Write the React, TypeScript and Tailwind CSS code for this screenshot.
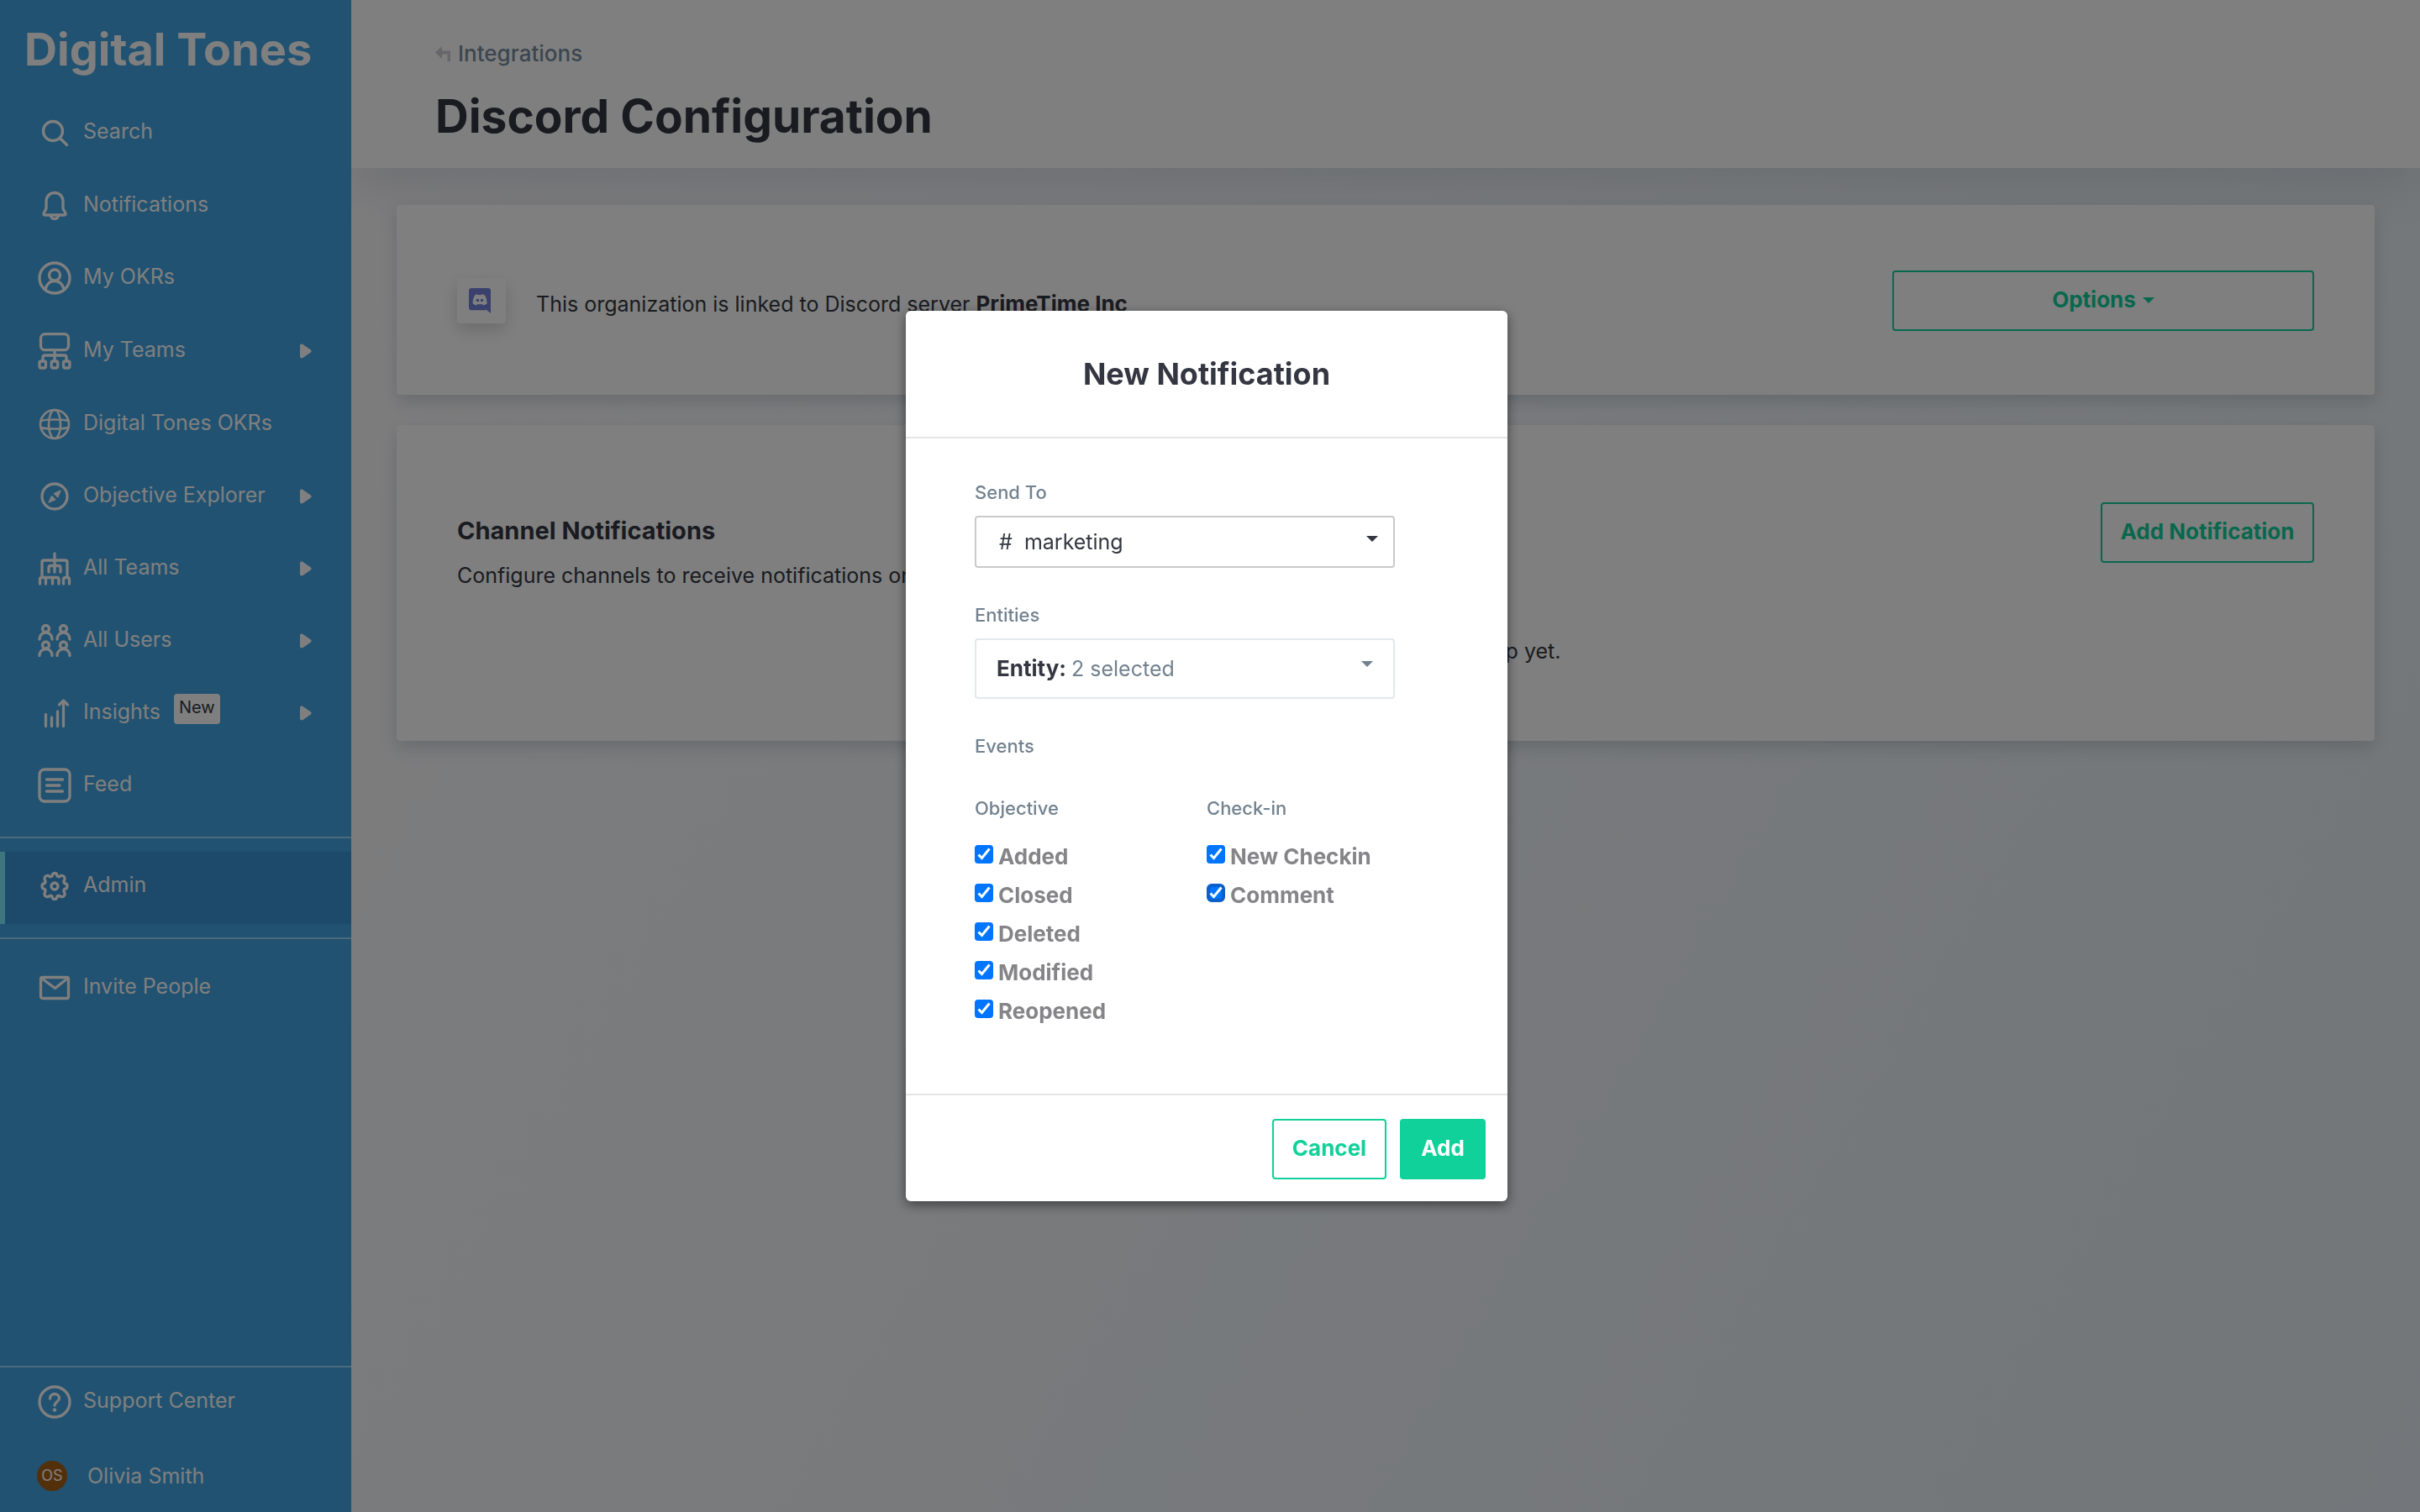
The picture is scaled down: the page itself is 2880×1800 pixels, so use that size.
import React, { useState } from "react";

type IconProps = { children: React.ReactNode };

function Icon({ children }: IconProps) {
  return (
    <svg
      viewBox="0 0 40 44"
      className="mb-1 h-11 w-10 shrink-0"
      fill="none"
      stroke="currentColor"
      strokeWidth="3.3"
      strokeLinecap="round"
      strokeLinejoin="round"
      aria-hidden="true"
    >
      {children}
    </svg>
  );
}

const SearchIcon = () => (
  <Icon>
    <circle cx="18" cy="20" r="11.5" />
    <path d="M26.5 28.5 34.5 36.5" />
  </Icon>
);

const BellIcon = () => (
  <Icon>
    <path d="M20 6.5c-6 0-10 4.5-10 10.500v7.500c0 3-3 4.500-3 7 0 1 .5 1.500 1.500 1.500h23c1 0 1.500-.5 1.500-1.500 0-2.500-3-4-3-7V17c0-6-4-10.500-10-10.500Z" />
    <path d="M15.500 34c.5 2.500 2.500 3.500 4.500 3.500s4-1 4.500-3.500" />
  </Icon>
);

const UserIcon = () => (
  <Icon>
    <circle cx="20" cy="22" r="18" />
    <circle cx="20" cy="18.500" r="6.500" />
    <path d="M9 35.500c1-6 5.500-10 11-10s10 4 11 10" />
  </Icon>
);

const TeamIcon = () => (
  <Icon>
    <rect x="3.500" y="1.700" width="33" height="19" rx="5" />
    <path d="M20 21v12M6 33v-3.500c0-1.500 1-2.500 2.500-2.500h23c1.500 0 2.500 1 2.500 2.500V33" />
    <rect x="2" y="34" width="7.500" height="8" rx="2" />
    <rect x="16.200" y="34" width="7.500" height="8" rx="2" />
    <rect x="30.500" y="34" width="7.500" height="8" rx="2" />
  </Icon>
);

const GlobeIcon = () => (
  <Icon>
    <g strokeWidth="2.600">
      <circle cx="20" cy="22" r="17" />
      <ellipse cx="20" cy="22" rx="7" ry="17" />
      <path d="M4 18c5-2 27-2 32 0M4 26c5 2 27 2 32 0" />
    </g>
  </Icon>
);

const CompassIcon = () => (
  <Icon>
    <circle cx="20" cy="22" r="15" />
    <path d="M27 15 19 18.500l4.500 4.500Z" fill="currentColor" strokeWidth="1" />
    <path d="M13 29l3.500-8 4.500 4.500Z" fill="currentColor" strokeWidth="1" />
  </Icon>
);

const OrgIcon = () => (
  <Icon>
    <path d="M20 4v22M5 32V14.500C5 13 6 12 7.500 12h25c1.500 0 2.500 1 2.500 2.500V32" />
    <path d="M13 26v-5c0-1.500 1-2.500 2.500-2.500h9c1.500 0 2.500 1 2.500 2.500v5" />
    <path d="M2.500 40v-5c0-1.500 1-2.500 2.500-2.500h17.500c1.500 0 2.500 1 2.500 2.500v5M9.500 33v7M17.500 33v7M30.500 40v-5c0-1.500 1-2.500 2.500-2.500h2c1.500 0 2.500 1 2.500 2.500v5" />
  </Icon>
);

const UsersIcon = () => (
  <Icon>
    {[
      [9.5, 7.5],
      [30.5, 7.5],
      [9.5, 27],
      [30.5, 27],
    ].map(([x, y]) => (
      <g key={`${x}-${y}`}>
        <circle cx={x} cy={y} r="4" />
        <path d={`M${x - 7.5} ${y + 12.5}c0-5 3.500-8 7.500-8s7.500 3 7.500 8`} />
      </g>
    ))}
  </Icon>
);

const InsightsIcon = () => (
  <Icon>
    <path d="M9.500 23.500v14M16.500 27v10.500M23.500 20v17.500M30.500 7.500v30M25.500 12l5-5 5 5" />
  </Icon>
);

const FeedIcon = () => (
  <Icon>
    <rect x="2" y="3" width="36" height="38" rx="6" />
    <path d="M10.500 15h19M10.500 22h15.500M10.500 29h19" />
  </Icon>
);

const GearIcon = () => (
  <Icon>
    <circle cx="20" cy="22" r="4" />
    <path d="M17 10c0-2 1-3.500 3-3.500s3 1.500 3 3.500c1.500 1.200 3 .8 4.500-.5 3-.5 5 1.500 4.500 4.500-1.200 1.500-1.500 3-.3 4.500 2 .2 3.300 1.500 3.300 3.500s-1.300 3.300-3.300 3.500c-1.200 1.500-.9 3 .3 4.500.5 3-1.500 5-4.500 4.500-1.500-1.300-3-1.700-4.500-.5 0 2-1 3.500-3 3.500s-3-1.500-3-3.500c-1.500-1.200-3-.8-4.500.5-3 .5-5-1.500-4.500-4.500 1.200-1.500 1.500-3 .3-4.500-2-.2-3.300-1.500-3.300-3.500s1.300-3.300 3.300-3.500c1.200-1.500.9-3-.3-4.500-.5-3 1.500-5 4.500-4.500 1.500 1.300 3 1.700 4.500.5Z" />
  </Icon>
);

const MailIcon = () => (
  <Icon>
    <rect x="3.500" y="9.500" width="33" height="25" rx="2" />
    <path d="M5 11l15.500 11.500L35 11" />
  </Icon>
);

const HelpIcon = () => (
  <Icon>
    <circle cx="20" cy="22" r="18" />
    <path d="M14.500 18c0-3.500 2.500-5.500 5.500-5.500s5.500 2 5.500 5c0 4-5 4.500-5.500 8.500" />
    <path d="M20 31.500v.1" strokeWidth="4.500" />
  </Icon>
);

const Caret = ({ className }: { className: string }) => (
  <svg viewBox="0 0 14 7" className={className} fill="currentColor" aria-hidden="true">
    <path d="M0 0h14L7 7Z" />
  </svg>
);

type NavItem = {
  label: string;
  icon: React.ReactNode;
  arrow?: boolean;
  badge?: string;
  tall?: boolean;
  active?: boolean;
};

const mainNav: NavItem[] = [
  { label: "Search", icon: <SearchIcon />, tall: true },
  { label: "Notifications", icon: <BellIcon /> },
  { label: "My OKRs", icon: <UserIcon /> },
  { label: "My Teams", icon: <TeamIcon />, arrow: true, tall: true },
  { label: "Digital Tones OKRs", icon: <GlobeIcon /> },
  { label: "Objective Explorer", icon: <CompassIcon />, arrow: true },
  { label: "All Teams", icon: <OrgIcon />, arrow: true },
  { label: "All Users", icon: <UsersIcon />, arrow: true },
  { label: "Insights", icon: <InsightsIcon />, arrow: true, badge: "New" },
  { label: "Feed", icon: <FeedIcon /> },
];

function NavRow({ item }: { item: NavItem }) {
  return (
    <a
      href="#"
      className={`flex items-center border-l-6 pr-[47px] pl-[39px] ${item.tall ? "h-[88px]" : "h-[86px]"} ${
        item.active ? "border-[#7ceafe] bg-[#3a94d4]" : "border-transparent"
      }`}
    >
      {item.icon}
      <span className="flex items-center gap-4 pb-2 pl-3.5">
        {item.label}
        {item.badge && (
          <span className="mb-1.5 flex h-9 items-center rounded bg-white px-1.5 pb-1 text-[20px] leading-6 text-[#343741]">
            {item.badge}
          </span>
        )}
      </span>
      {item.arrow && (
        <svg viewBox="0 0 14 18" className="mb-1 ml-auto h-[18px] w-3.5" fill="currentColor" aria-hidden="true">
          <path d="M0 2.500C0 .5 2 0 3.500 1l9 6.300c1.500 1 1.500 2.400 0 3.400l-9 6.300C2 18 0 17.500 0 15.500Z" />
        </svg>
      )}
    </a>
  );
}

const Divider = () => <hr className="h-0.5 border-0 bg-[#9ad4f4]" />;

function Sidebar() {
  return (
    <nav className="relative z-10 flex w-[418px] shrink-0 flex-col bg-[#42a4e2] text-[25px] leading-8 text-white">
      <div className="flex h-[116px] items-center pt-0.5 pl-[29px] text-[54px] leading-none font-bold">
        Digital Tones
      </div>
      {mainNav.map((item) => (
        <NavRow key={item.label} item={item} />
      ))}
      <div className="my-4 flex flex-col gap-4">
        <Divider />
        <NavRow item={{ label: "Admin", icon: <GearIcon />, active: true }} />
        <Divider />
      </div>
      <NavRow item={{ label: "Invite People", icon: <MailIcon />, tall: true }} />
      <div className="mt-auto">
        <Divider />
        <NavRow item={{ label: "Support Center", icon: <HelpIcon /> }} />
        <a href="#" className="flex h-[86px] items-center gap-6 pl-11">
          <span className="flex size-9 items-center justify-center rounded-full bg-[#a66018] text-[18px] leading-6">
            OS
          </span>
          Olivia Smith
        </a>
      </div>
    </nav>
  );
}

const card = "rounded bg-white px-[72px] shadow-[0_8px_20px_rgba(60,80,100,0.2)]";
const outlineButton =
  "flex h-[72px] items-center justify-center rounded border-2 border-[#11d19a] text-[26px] leading-8 font-bold text-[#11d19a]";

function Page() {
  return (
    <div className="flex min-w-0 flex-1 flex-col bg-linear-120 from-[#fcfafc] via-[#f0f5f8] to-[#e6edf4]">
      <header className="bg-white px-[100px] pt-12 pb-7 shadow-[0_20px_60px_rgba(60,90,120,0.16)]">
        <a href="#" className="flex w-fit items-center gap-[9px] text-[26px] leading-8 font-medium text-[#788c9e]">
          <svg viewBox="0 0 18 18" className="h-[18px] w-[18px] text-[#cdced6]" fill="currentColor" aria-hidden="true">
            <path d="M0 7.500 8 0v5.500h10V18h-3.500V9.500H8V15Z" />
          </svg>
          Integrations
        </a>
        <h1 className="mt-6 text-[55px] leading-[68px] font-bold text-[#343741]">Discord Configuration</h1>
      </header>
      <main className="flex flex-col gap-9 px-[54px] pt-11 text-[25px] leading-8 text-[#343741]">
        <section className={`${card} flex h-[226px] items-center pt-0.5`}>
          <span className="flex h-[54px] w-[58px] items-center justify-center rounded bg-white pr-1 shadow-[0_8px_20px_rgba(0,0,0,0.16)]">
            <svg viewBox="0 0 26 30" className="h-[30px] w-[26px]" role="img" aria-label="Discord">
              <path d="M3 0h20a3 3 0 0 1 3 3v27l-6-5 .6 1.200H3A3 3 0 0 1 0 23.200V3a3 3 0 0 1 3-3Z" fill="#7283d8" />
              <path
                d="M9 7.500 7 8.500C5 12 4.500 15 4.700 18.500c1.500 1.200 3 1.800 4.500 2l1-1.500c2 .4 3.800.4 5.800 0l1 1.500c1.500-.2 3-.8 4.500-2C21.500 15 21 12 19 8.500l-2-1-1.500-.3-.6 1a12 12 0 0 0-3.800 0l-.6-1Z"
                fill="#fff"
              />
              <circle cx="10.400" cy="14.500" r="1.800" fill="#7283d8" />
              <circle cx="15.600" cy="14.500" r="1.800" fill="#7283d8" />
            </svg>
          </span>
          <p className="pt-2 pl-9">
            This organization is linked to Discord server{" "}
            <strong className="text-[26px] font-bold">PrimeTime Inc</strong>
          </p>
          <button type="button" className={`${outlineButton} ml-auto w-[502px] gap-2 pb-0.5`}>
            Options
            <Caret className="h-[7px] w-3.5" />
          </button>
        </section>
        <section className={`${card} h-[376px] pt-[92px]`}>
          <div className="flex items-start justify-between">
            <div className="pt-4">
              <h2 className="text-[29px] leading-9 font-bold">Channel Notifications</h2>
              <p className="mt-[19px]">Configure channels to receive notifications on activity.</p>
            </div>
            <button type="button" className={`${outlineButton} w-[254px] pb-0.5`}>
              Add Notification
            </button>
          </div>
          <p className="mt-[58px] text-center">No channel notifications set up yet.</p>
        </section>
      </main>
    </div>
  );
}

const eventGroups = [
  { title: "Objective", events: ["Added", "Closed", "Deleted", "Modified", "Reopened"] },
  { title: "Check-in", events: ["New Checkin", "Comment"] },
];

const fieldLabel = "block text-[22px] leading-7 font-medium text-[#72828f]";

function EventCheckbox({ label }: { label: string }) {
  const [checked, setChecked] = useState(true);
  return (
    <label className="flex h-[46px] items-start gap-1.5 text-[26px] leading-8 font-bold text-[#858589]">
      <span className="mt-0.5 grid size-[22px]">
        <input
          type="checkbox"
          checked={checked}
          onChange={(e) => setChecked(e.target.checked)}
          className={`col-start-1 row-start-1 size-[22px] appearance-none border-[#0a5fc8] bg-[#0075ff] ${
            label === "Comment" ? "rounded-md border-4" : "rounded"
          }`}
        />
        {checked && (
          <svg
            viewBox="0 0 22 22"
            className="pointer-events-none col-start-1 row-start-1 size-[22px]"
            fill="none"
            aria-hidden="true"
          >
            <path d="M4.500 11.500 8.500 15.500 17.500 4.500" stroke="#fff" strokeWidth="3" />
          </svg>
        )}
      </span>
      {label}
    </label>
  );
}

function NotificationDialog() {
  return (
    <div
      role="dialog"
      aria-labelledby="dialog-title"
      className="w-[716px] rounded-md bg-white text-[#343741] shadow-[0_4px_14px_rgba(0,0,0,0.5)]"
    >
      <h2
        id="dialog-title"
        className="flex h-[152px] items-center justify-center border-b-2 border-[#e5e5e5] text-[36px] leading-none font-bold"
      >
        New Notification
      </h2>
      <div className="px-[82px] pt-[50px] pb-[68px]">
        <label htmlFor="channel" className={fieldLabel}>
          Send To
        </label>
        <div className="relative mt-3.5 w-[500px]">
          <select
            id="channel"
            className="h-[62px] w-full appearance-none rounded border-2 border-[#cacaca] bg-white pl-[27px] text-[25px] leading-8"
          >
            <option>#&nbsp; marketing</option>
          </select>
          <Caret className="pointer-events-none absolute top-6 right-5 h-[7px] w-3.5" />
        </div>
        <span id="entities" className={`${fieldLabel} mt-[42px]`}>
          Entities
        </span>
        <button
          type="button"
          aria-labelledby="entities entity-value"
          className="mt-3.5 flex h-[72px] w-[500px] items-center rounded border-2 border-[#e3e8ec] px-6 text-[25px] leading-8 text-[#72828f]"
        >
          <span id="entity-value" className="flex items-center gap-1.5">
            <strong className="text-[26px] font-bold text-[#343741]">Entity:</strong>2 selected
          </span>
          <Caret className="mb-3 ml-auto h-[7px] w-3.5" />
        </button>
        <div className={`${fieldLabel} mt-[42px]`}>Events</div>
        <div className="mt-[46px] grid grid-cols-2">
          {eventGroups.map((group) => (
            <fieldset key={group.title}>
              <legend className={`${fieldLabel} mb-7`}>{group.title}</legend>
              {group.events.map((event) => (
                <EventCheckbox key={event} label={event} />
              ))}
            </fieldset>
          ))}
        </div>
      </div>
      <div className="flex justify-end gap-4 border-t-2 border-[#e5e5e5] px-[26px] pt-7 pb-[26px]">
        <button type="button" className={`${outlineButton} w-[136px] pb-0.5`}>
          Cancel
        </button>
        <button
          type="button"
          className="h-[72px] w-[102px] rounded bg-[#11d19a] pb-0.5 text-[26px] leading-8 font-bold text-white"
        >
          Add
        </button>
      </div>
    </div>
  );
}

export default function App() {
  return (
    <div className='flex min-h-screen font-["Inter",sans-serif]'>
      <Sidebar />
      <Page />
      <div className="fixed inset-0 z-20 flex items-center justify-center bg-black/50 pr-2">
        <NotificationDialog />
      </div>
    </div>
  );
}
